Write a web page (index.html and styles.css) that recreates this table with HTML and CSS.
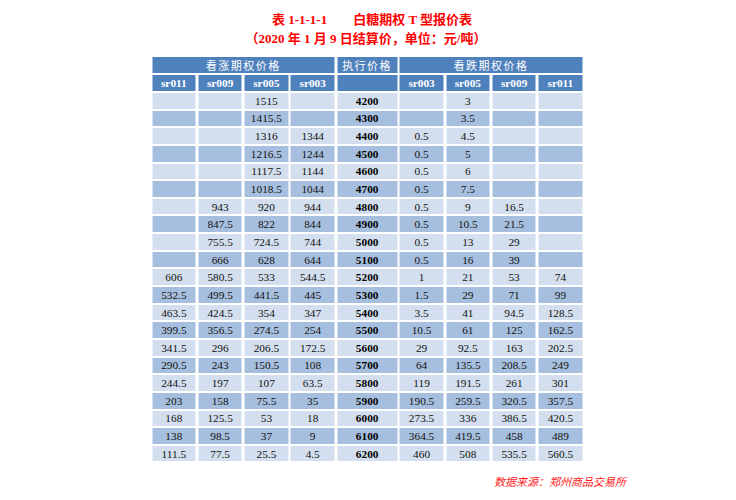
FILE: index.html
```html
<!DOCTYPE html>
<html lang="zh">
<head>
<meta charset="utf-8">
<title>白糖期权T型报价表</title>
<link rel="stylesheet" href="styles.css">
</head>
<body>
<div class="page">
  <div class="title">
    <div class="line">表 1-1-1-1<span class="gap">白糖期权 T 型报价表</span></div>
    <div class="line">（2020 年 1 月 9 日结算价，单位：元/吨）</div>
  </div>
  <div class="grid">
    <div class="h group call">看涨期权价格</div>
    <div class="h group-strike">执行价格</div>
    <div class="h group put">看跌期权价格</div>
    <div class="h sub">sr011</div><div class="h sub">sr009</div><div class="h sub">sr005</div><div class="h sub">sr003</div>
    <div class="h sub"></div>
    <div class="h sub">sr003</div><div class="h sub">sr005</div><div class="h sub">sr009</div><div class="h sub">sr011</div>

    <div class="c l"></div><div class="c l"></div><div class="c l">1515</div><div class="c l"></div><div class="c l k">4200</div><div class="c l"></div><div class="c l">3</div><div class="c l"></div><div class="c l"></div>
    <div class="c d"></div><div class="c d"></div><div class="c d">1415.5</div><div class="c d"></div><div class="c d k">4300</div><div class="c d"></div><div class="c d">3.5</div><div class="c d"></div><div class="c d"></div>
    <div class="c l"></div><div class="c l"></div><div class="c l">1316</div><div class="c l">1344</div><div class="c l k">4400</div><div class="c l">0.5</div><div class="c l">4.5</div><div class="c l"></div><div class="c l"></div>
    <div class="c d"></div><div class="c d"></div><div class="c d">1216.5</div><div class="c d">1244</div><div class="c d k">4500</div><div class="c d">0.5</div><div class="c d">5</div><div class="c d"></div><div class="c d"></div>
    <div class="c l"></div><div class="c l"></div><div class="c l">1117.5</div><div class="c l">1144</div><div class="c l k">4600</div><div class="c l">0.5</div><div class="c l">6</div><div class="c l"></div><div class="c l"></div>
    <div class="c d"></div><div class="c d"></div><div class="c d">1018.5</div><div class="c d">1044</div><div class="c d k">4700</div><div class="c d">0.5</div><div class="c d">7.5</div><div class="c d"></div><div class="c d"></div>
    <div class="c l"></div><div class="c l">943</div><div class="c l">920</div><div class="c l">944</div><div class="c l k">4800</div><div class="c l">0.5</div><div class="c l">9</div><div class="c l">16.5</div><div class="c l"></div>
    <div class="c d"></div><div class="c d">847.5</div><div class="c d">822</div><div class="c d">844</div><div class="c d k">4900</div><div class="c d">0.5</div><div class="c d">10.5</div><div class="c d">21.5</div><div class="c d"></div>
    <div class="c l"></div><div class="c l">755.5</div><div class="c l">724.5</div><div class="c l">744</div><div class="c l k">5000</div><div class="c l">0.5</div><div class="c l">13</div><div class="c l">29</div><div class="c l"></div>
    <div class="c d"></div><div class="c d">666</div><div class="c d">628</div><div class="c d">644</div><div class="c d k">5100</div><div class="c d">0.5</div><div class="c d">16</div><div class="c d">39</div><div class="c d"></div>
    <div class="c l">606</div><div class="c l">580.5</div><div class="c l">533</div><div class="c l">544.5</div><div class="c l k">5200</div><div class="c l">1</div><div class="c l">21</div><div class="c l">53</div><div class="c l">74</div>
    <div class="c d">532.5</div><div class="c d">499.5</div><div class="c d">441.5</div><div class="c d">445</div><div class="c d k">5300</div><div class="c d">1.5</div><div class="c d">29</div><div class="c d">71</div><div class="c d">99</div>
    <div class="c l">463.5</div><div class="c l">424.5</div><div class="c l">354</div><div class="c l">347</div><div class="c l k">5400</div><div class="c l">3.5</div><div class="c l">41</div><div class="c l">94.5</div><div class="c l">128.5</div>
    <div class="c d">399.5</div><div class="c d">356.5</div><div class="c d">274.5</div><div class="c d">254</div><div class="c d k">5500</div><div class="c d">10.5</div><div class="c d">61</div><div class="c d">125</div><div class="c d">162.5</div>
    <div class="c l">341.5</div><div class="c l">296</div><div class="c l">206.5</div><div class="c l">172.5</div><div class="c l k">5600</div><div class="c l">29</div><div class="c l">92.5</div><div class="c l">163</div><div class="c l">202.5</div>
    <div class="c d">290.5</div><div class="c d">243</div><div class="c d">150.5</div><div class="c d">108</div><div class="c d k">5700</div><div class="c d">64</div><div class="c d">135.5</div><div class="c d">208.5</div><div class="c d">249</div>
    <div class="c l">244.5</div><div class="c l">197</div><div class="c l">107</div><div class="c l">63.5</div><div class="c l k">5800</div><div class="c l">119</div><div class="c l">191.5</div><div class="c l">261</div><div class="c l">301</div>
    <div class="c d">203</div><div class="c d">158</div><div class="c d">75.5</div><div class="c d">35</div><div class="c d k">5900</div><div class="c d">190.5</div><div class="c d">259.5</div><div class="c d">320.5</div><div class="c d">357.5</div>
    <div class="c l">168</div><div class="c l">125.5</div><div class="c l">53</div><div class="c l">18</div><div class="c l k">6000</div><div class="c l">273.5</div><div class="c l">336</div><div class="c l">386.5</div><div class="c l">420.5</div>
    <div class="c d">138</div><div class="c d">98.5</div><div class="c d">37</div><div class="c d">9</div><div class="c d k">6100</div><div class="c d">364.5</div><div class="c d">419.5</div><div class="c d">458</div><div class="c d">489</div>
    <div class="c l">111.5</div><div class="c l">77.5</div><div class="c l">25.5</div><div class="c l">4.5</div><div class="c l k">6200</div><div class="c l">460</div><div class="c l">508</div><div class="c l">535.5</div><div class="c l">560.5</div>
  </div>
  <div class="source">数据来源：郑州商品交易所</div>
</div>
</body>
</html>
```

FILE: styles.css
```css
html, body {
  margin: 0;
  padding: 0;
  background: #ffffff;
}

.page {
  width: 736px;
  height: 500px;
  font-family: "Liberation Serif", "Noto Sans CJK SC", serif;
}

.title {
  padding-top: 10px;
  text-align: center;
  color: #ff0000;
  font-weight: bold;
  font-size: 13px;
  line-height: 19px;
}

.title .line:first-child {
  padding-left: 8px;
}

.title .line:last-child {
  padding-right: 4px;
}

.gap {
  margin-left: 26px;
}

.grid {
  margin: 9px auto 0;
  width: 431px;
  display: grid;
  grid-template-columns: repeat(4, 43.7px) 60px repeat(4, 43.7px);
  grid-template-rows: 16px 16px repeat(21, 15.65px);
  column-gap: 2.6px;
  row-gap: 2px;
  transform: translateX(-0.5px);
}

.h {
  background: #4f81bd;
  color: #ffffff;
  font-weight: bold;
  font-size: 11.3px;
  display: flex;
  align-items: center;
  justify-content: center;
}

.group {
  grid-column: span 4;
  font-family: "Noto Sans CJK SC", sans-serif;
  font-weight: normal;
  font-size: 11px;
  letter-spacing: 1.5px;
}

.group-strike {
  font-family: "Noto Sans CJK SC", sans-serif;
  font-weight: normal;
  font-size: 11px;
  letter-spacing: 1.5px;
}

.c {
  display: flex;
  align-items: center;
  justify-content: center;
  font-size: 11.3px;
  color: #111111;
}

.l {
  background: #d3dfee;
}

.d {
  background: #a7bfde;
}

.k {
  font-weight: bold;
  color: #000000;
}

.source {
  margin-top: 13px;
  text-align: right;
  padding-right: 110px;
  color: #ff1a1a;
  font-family: "Noto Sans CJK SC", sans-serif;
  font-style: italic;
  font-size: 11px;
  line-height: 14px;
}
```
